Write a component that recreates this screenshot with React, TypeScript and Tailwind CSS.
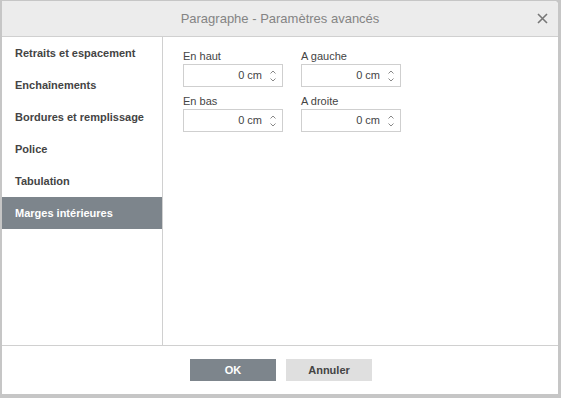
import type { ReactNode } from 'react'

const tabs = [
  'Retraits et espacement',
  'Enchaînements',
  'Bordures et remplissage',
  'Police',
  'Tabulation',
  'Marges intérieures',
]

// ── Spin input ───────────────────────────────────────────────
function SpinInput({ label, value }: { label: string; value: string }) {
  return (
    <div className="flex flex-col">
      <label className="text-[11px] leading-[14px] text-[#444] mb-[1px]">{label}</label>
      <div className="flex items-center w-[100px] h-[23px] border border-[#cfcfcf] bg-white">
        <span className="flex-1 text-right text-[11px] text-[#444] pr-[5px]">{value}</span>
        <div className="flex flex-col items-center justify-center w-[12px] h-full mr-[3px] gap-[4px]">
          <svg width="6" height="4" viewBox="0 0 6 4">
            <path d="M0.5 3.5 L3 1 L5.5 3.5" fill="none" stroke="#888" strokeWidth="1" />
          </svg>
          <svg width="6" height="4" viewBox="0 0 6 4">
            <path d="M0.5 0.5 L3 3 L5.5 0.5" fill="none" stroke="#888" strokeWidth="1" />
          </svg>
        </div>
      </div>
    </div>
  )
}

function Button({ children, primary }: { children: ReactNode; primary?: boolean }) {
  return (
    <button
      className={
        primary
          ? 'w-[86px] h-[22px] bg-[#7d858c] text-white text-[11px] font-bold'
          : 'w-[86px] h-[22px] bg-[#dfdfdf] text-[#444] text-[11px] font-bold'
      }
    >
      {children}
    </button>
  )
}

// ── Main export ──────────────────────────────────────────────
export default function App() {
  return (
    <div
      className="w-[561px] h-[398px] bg-[#c6c6c6] pl-[2px] pt-[1px] pr-[3px] pb-[4px]"
      style={{ fontFamily: '"Liberation Sans", Arial, sans-serif' }}
    >
      <div className="flex flex-col h-full bg-white rounded-tr-[4px] overflow-hidden">
        {/* header */}
        <div className="relative flex items-center justify-center h-[36px] bg-[#ececec] border-b border-[#d0d0d0] shrink-0">
          <span className="text-[13px] text-[#848484]">Paragraphe - Paramètres avancés</span>
          <svg
            className="absolute right-[10px] top-[12px]"
            width="11"
            height="11"
            viewBox="0 0 11 11"
          >
            <path d="M1 1 L10 10 M10 1 L1 10" stroke="#777" strokeWidth="1.6" />
          </svg>
        </div>

        {/* body */}
        <div className="flex flex-1 min-h-0 border-b border-[#d0d0d0]">
          <div className="w-[161px] border-r border-[#d0d0d0] shrink-0">
            {tabs.map((t, i) => (
              <div
                key={t}
                className={
                  i === tabs.length - 1
                    ? 'h-[32px] flex items-center px-[13px] bg-[#7d858c] text-white text-[11px] font-bold'
                    : 'h-[32px] flex items-center px-[13px] text-[#444] text-[11px] font-bold'
                }
              >
                {t}
              </div>
            ))}
          </div>
          <div className="flex-1 pl-[20px] pt-[12px]">
            <div className="grid grid-cols-[100px_100px] gap-x-[18px] gap-y-[7px]">
              <SpinInput label="En haut" value="0 cm" />
              <SpinInput label="A gauche" value="0 cm" />
              <SpinInput label="En bas" value="0 cm" />
              <SpinInput label="A droite" value="0 cm" />
            </div>
          </div>
        </div>

        {/* footer */}
        <div className="flex items-center justify-center gap-[10px] h-[48px] shrink-0 pl-[2px]">
          <Button primary>OK</Button>
          <Button>Annuler</Button>
        </div>
      </div>
    </div>
  )
}
